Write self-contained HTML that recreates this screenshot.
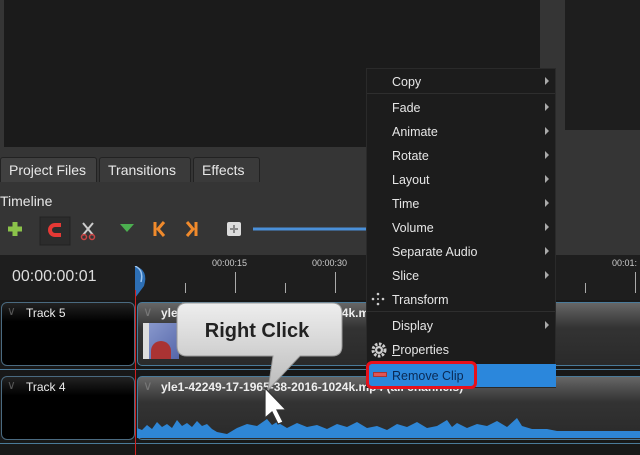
<!DOCTYPE html>
<html><head><meta charset="utf-8"><style>
*{margin:0;padding:0;box-sizing:border-box}
body{width:640px;height:455px;overflow:hidden;background:#353535;font-family:"Liberation Sans",sans-serif;position:relative;color:#ddd}
.a{position:absolute}
.tab{position:absolute;top:157px;height:25px;border:1px solid #222;border-bottom:none;background:#3a3a3a;color:#e8e8e8;font-size:14px;line-height:24px;padding-left:8px;border-radius:3px 3px 0 0}
.mi{position:absolute;left:392px;font-size:12.5px;color:#e6e6e6}
.ar{position:absolute;left:545px;width:0;height:0;border-left:4px solid #aaa;border-top:4px solid transparent;border-bottom:4px solid transparent}
.th{position:absolute;left:1px;width:134px;background:linear-gradient(#222,#000 30%);border:1px solid #4a6a80;border-radius:6px;color:#eee;font-size:12px}
.clip{position:absolute;left:137px;width:510px;background:linear-gradient(#666,#333 40%,#2a2a2a);border:1px solid #4a7a99;border-radius:5px}
.tick{position:absolute;width:1px;background:#aaa}
</style></head><body>
<div class="a" style="left:4px;top:0;width:536px;height:147px;background:#1b1b1b"></div>
<div class="a" style="left:565px;top:0;width:75px;height:130px;background:#1e1e1e"></div>
<div class="tab" style="left:0;width:97px;background:#404040">Project Files</div>
<div class="tab" style="left:99px;width:92px">Transitions</div>
<div class="tab" style="left:193px;width:67px">Effects</div>
<div class="a" style="left:0;top:193px;font-size:14px;color:#e8e8e8">Timeline</div>
<svg class="a" style="left:0;top:212px" width="370" height="36">
<path d="M8 17h14M15 10v14" stroke="#8bc34a" stroke-width="5"/>
<rect x="40" y="5" width="30" height="28" fill="#2c2c2c" stroke="#222"/>
<path d="M61 13h-6a5 5 0 0 0 0 10h6" stroke="#e53935" stroke-width="4" fill="none"/>
<path d="M83 11l10 12M93 11l-10 12" stroke="#ccc" stroke-width="2"/><circle cx="84" cy="25" r="2.5" fill="none" stroke="#c44" stroke-width="1.5"/><circle cx="92" cy="25" r="2.5" fill="none" stroke="#c44" stroke-width="1.5"/>
<path d="M120 12h14l-7 8z" fill="#4caf50"/>
<path d="M155 10v14M164 10l-6 7 6 7" stroke="#f08a2c" stroke-width="3" fill="none"/>
<path d="M196 10v14M187 10l6 7-6 7" stroke="#f08a2c" stroke-width="3" fill="none"/>
<rect x="227" y="10" width="14" height="14" rx="2" fill="#ddd"/><path d="M234 13v8M230 17h8" stroke="#888" stroke-width="2"/>
<line x1="253" y1="17" x2="370" y2="17" stroke="#4a90d9" stroke-width="3"/>
</svg>
<div class="a" style="left:0;top:255px;width:640px;height:45px;background:#1e1e1e"></div>
<div class="a" style="left:12px;top:268px;font-size:16px;color:#ddd">00:00:00:01</div>
<div class="a" style="left:212px;top:258px;font-size:9px;color:#ccc">00:00:15</div>
<div class="a" style="left:312px;top:258px;font-size:9px;color:#ccc">00:00:30</div>
<div class="a" style="left:612px;top:258px;font-size:9px;color:#ccc">00:01:</div>
<div class="tick" style="left:185px;top:283px;height:10px"></div>
<div class="tick" style="left:235px;top:272px;height:21px"></div>
<div class="tick" style="left:285px;top:283px;height:10px"></div>
<div class="tick" style="left:335px;top:272px;height:21px"></div>
<div class="tick" style="left:585px;top:283px;height:10px"></div>
<div class="tick" style="left:635px;top:272px;height:21px"></div>
<svg class="a" style="left:134px;top:266px" width="16" height="34"><path d="M1 0q14 4 9 20l-9 12z" fill="#2d6fb5"/><path d="M1 0q9 4 6 16" stroke="#9cc4ee" stroke-width="1.5" fill="none"/></svg>
<div class="a" style="left:0;top:300px;width:640px;height:155px;background:#181818"></div>
<div class="a" style="left:0;top:369px;width:640px;height:1px;background:#4a7a99"></div>
<div class="a" style="left:0;top:443px;width:640px;height:1px;background:#4a7a99"></div>
<div class="th" style="top:302px;height:64px"><span class="a" style="left:24px;top:3px">Track 5</span><span class="a" style="left:5px;top:1px;color:#555">∨</span></div>
<div class="th" style="top:376px;height:64px"><span class="a" style="left:24px;top:3px">Track 4</span><span class="a" style="left:5px;top:1px;color:#555">∨</span></div>
<div class="clip" style="top:302px;height:64px"><span class="a" style="left:5px;top:1px;color:#777;font-size:13px">∨</span><span class="a" style="left:23px;top:3px;font-size:12px;font-weight:bold;color:#eee">yle1-42249-17-1965-38-2016-1024k.mp4</span>
<div class="a" style="left:5px;top:20px;width:36px;height:36px;background:linear-gradient(135deg,#8898cc,#5566aa);border-left:6px solid #ddd"><div class="a" style="left:2px;top:18px;width:20px;height:18px;background:#a33;border-radius:10px 10px 0 0"></div></div></div>
<div class="clip" style="top:376px;height:64px"><span class="a" style="left:5px;top:1px;color:#777;font-size:13px">∨</span><span class="a" style="left:23px;top:3px;font-size:12px;font-weight:bold;color:#eee">yle1-42249-17-1965-38-2016-1024k.mp4 (all channels)</span></div>
<svg class="a" style="left:137px;top:410px" width="503" height="30"><path d="M0 28L0 18 5 20 10 15 15 19 20 12 25 17 30 14 35 18 40 10 45 16 50 13 55 17 60 11 65 16 70 14 75 19 80 22 90 24 100 18 110 14 120 16 130 9 135 15 140 12 150 18 160 13 170 17 180 15 190 19 200 14 210 17 220 12 230 18 240 16 250 20 260 14 270 17 280 12 290 18 300 16 310 10 315 17 320 13 330 18 340 14 350 16 360 11 370 17 380 8 385 16 395 19 410 19 420 21 503 21 503 28z" fill="#2e86d6"/></svg>
<div class="a" style="left:135px;top:290px;width:1px;height:165px;background:#d02020"></div>
<svg class="a" style="left:170px;top:300px" width="180" height="100"><defs><linearGradient id="g" x1="0" y1="0" x2="0" y2="1"><stop offset="0" stop-color="#eee"/><stop offset="1" stop-color="#bbb"/></linearGradient></defs>
<path d="M12 3h150q10 0 10 10v33q0 10-10 10h-32l-32 34 5-34h-86q-10 0-10-10v-33q0-10 10-10z" fill="url(#g)" stroke="#999"/>
<text x="87" y="37" text-anchor="middle" font-family="Liberation Sans" font-weight="bold" font-size="20" fill="#222">Right Click</text></svg>
<svg class="a" style="left:262px;top:386px" width="30" height="50"><path d="M3 2v30l7-6 6 12 5-2-6-12 9 0z" fill="#fff" stroke="#333" stroke-width="1.2"/></svg>
<div class="a" style="left:366px;top:68px;width:190px;height:320px;background:#1c1c1c;border:1px solid #2a2a2a"></div>
<div class="a" style="left:367px;top:93px;width:188px;height:1px;background:#2e2e2e"></div>
<div class="a" style="left:367px;top:311px;width:188px;height:1px;background:#2e2e2e"></div>
<div class="a" style="left:367px;top:364px;width:189px;height:23px;background:#2b87dc"></div>
<div class="mi" style="top:75px">Copy</div><div class="ar" style="top:77px"></div>
<div class="mi" style="top:101px">Fade</div><div class="ar" style="top:103px"></div>
<div class="mi" style="top:125px">Animate</div><div class="ar" style="top:127px"></div>
<div class="mi" style="top:149px">Rotate</div><div class="ar" style="top:151px"></div>
<div class="mi" style="top:173px">Layout</div><div class="ar" style="top:175px"></div>
<div class="mi" style="top:197px">Time</div><div class="ar" style="top:199px"></div>
<div class="mi" style="top:221px">Volume</div><div class="ar" style="top:223px"></div>
<div class="mi" style="top:245px">Separate Audio</div><div class="ar" style="top:247px"></div>
<div class="mi" style="top:269px">Slice</div><div class="ar" style="top:271px"></div>
<div class="mi" style="top:293px">Transform</div>
<div class="mi" style="top:319px">Display</div><div class="ar" style="top:321px"></div>
<div class="mi" style="top:343px"><u>P</u>roperties</div>
<div class="mi" style="top:369px;color:#0a2a55">Remove Clip</div>
<svg class="a" style="left:371px;top:292px" width="14" height="14"><g fill="#ccc"><circle cx="7" cy="2" r="1.3"/><circle cx="7" cy="12" r="1.3"/><circle cx="2" cy="7" r="1.3"/><circle cx="12" cy="7" r="1.3"/><circle cx="7" cy="7" r="1"/></g></svg>
<svg class="a" style="left:371px;top:342px" width="16" height="16"><circle cx="8" cy="8" r="6" fill="none" stroke="#ccc" stroke-width="3" stroke-dasharray="2.5 1.5"/><circle cx="8" cy="8" r="4" fill="#ccc"/><circle cx="8" cy="8" r="1.8" fill="#1c1c1c"/></svg>
<div class="a" style="left:373px;top:372px;width:14px;height:5px;background:#e05555;border:1px solid #a33"></div>
<div class="a" style="left:366px;top:361px;width:111px;height:28px;border:3px solid #e8101a;border-radius:6px"></div>
</body></html>
